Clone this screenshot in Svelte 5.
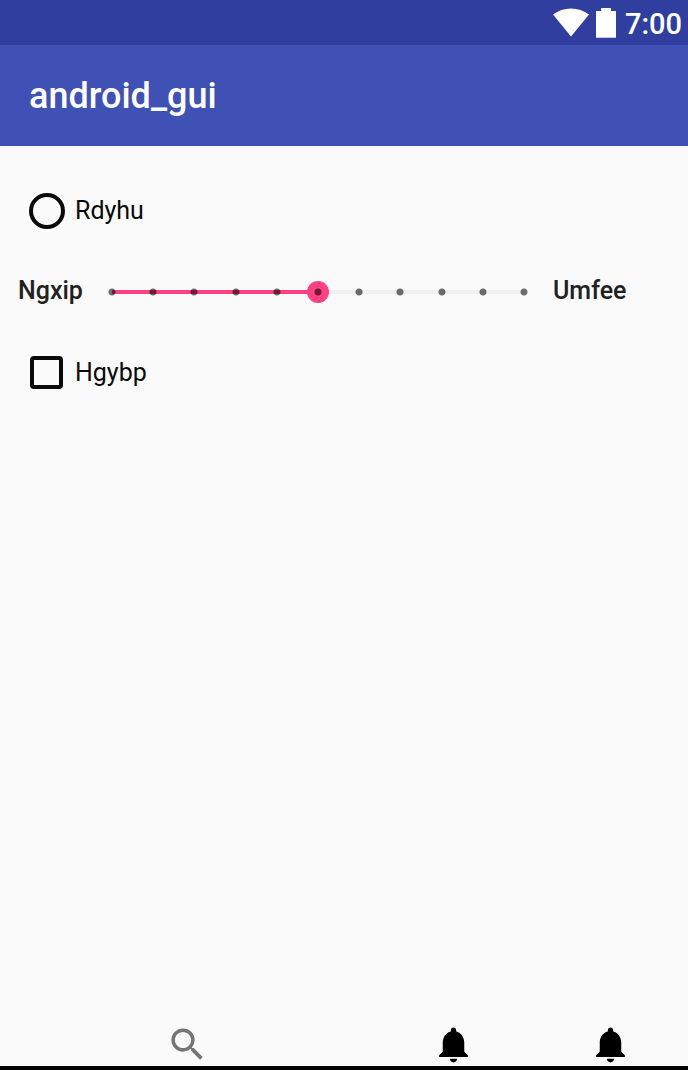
<script>
  let picked = $state('');
  let checked = $state(false);
  let level = $state(5);
  const steps = Array.from({ length: 11 }, (_, i) => i);
</script>

<div class="screen">
  <div class="status">
    <svg class="wifi" viewBox="0 0 36 29" aria-hidden="true">
      <path d="M0 6.500Q8 .5 18 .5T36 6.500L18 28.500Z" />
    </svg>
    <svg class="battery" viewBox="0 0 20 30" aria-hidden="true">
      <path d="M0 3h5V0h10v3h5v27H0Z" />
      <path class="edge" d="M0 29h20v1H0Z" />
    </svg>
    <time>7:00</time>
  </div>

  <header><h1>android_gui</h1></header>

  <main>
    <label class="choice">
      <input type="radio" name="option" value="rdyhu" bind:group={picked} />
      <span>Rdyhu</span>
    </label>

    <div class="range">
      <label for="level">Ngxip</label>
      <div class="slider">
        <input id="level" type="range" min="0" max="10" step="1" bind:value={level} style="--fill: {level * 10}%" />
        <div class="ticks" aria-hidden="true">
          {#each steps as step (step)}<i></i>{/each}
        </div>
      </div>
      <span class="end">Umfee</span>
    </div>

    <label class="choice">
      <input type="checkbox" bind:checked />
      <span>Hgybp</span>
    </label>
  </main>

  <nav>
    <button class="search" aria-label="Search">
      <svg viewBox="0 0 24 24" aria-hidden="true">
        <path d="M15.500 14h-.79l-.28-.27A6.471 6.471 0 0 0 16 9.500 6.500 6.500 0 1 0 9.500 16c1.610 0 3.090-.59 4.230-1.570l.27.28v.79l5 4.990L20.490 19l-4.990-5zm-6 0C7.010 14 5 11.990 5 9.500S7.010 5 9.500 5 14 7.010 14 9.500 11.990 14 9.500 14z" />
      </svg>
    </button>
    {#each ['Notifications', 'Alerts'] as name (name)}
      <button aria-label={name}>
        <svg viewBox="0 0 24 24" aria-hidden="true">
          <path d="M12 22c1.100 0 2-.9 2-2h-4c0 1.100.89 2 2 2zm6-6v-5c0-3.070-1.640-5.640-4.500-6.320V4c0-.83-.67-1.500-1.500-1.500s-1.500.67-1.500 1.500v.68C7.630 5.360 6 7.920 6 11v5l-2 2v1h16v-1l-2-2z" />
        </svg>
      </button>
    {/each}
  </nav>
</div>

<style>
  :global(body) {
    margin: 0;
    background: #fafafa;
  }

  .screen {
    box-sizing: border-box;
    min-height: 100vh;
    display: flex;
    flex-direction: column;
    border-bottom: 4px solid #000;
    background: #fafafa;
    color: #0a0a0a;
    font-family: Roboto, sans-serif;
    font-size: 25px;
    line-height: 32px;
  }

  .status {
    box-sizing: border-box;
    height: 45px;
    padding: 8px 6px 0 0;
    display: flex;
    justify-content: flex-end;
    align-items: flex-start;
    background: #303f9f;
    color: #fff;
    font-size: 29px;
    font-weight: 500;
  }

  .status svg {
    fill: #fff;
  }

  .wifi {
    width: 36px;
    height: 29px;
    margin-right: 7px;
  }

  .battery {
    width: 20px;
    height: 30px;
    margin-right: 9px;
  }

  .battery .edge {
    fill: #c5cae9;
  }

  header {
    display: flex;
    align-items: center;
    height: 101px;
    padding: 0 29px;
    background: #3f51b5;
    color: #fff;
  }

  h1 {
    margin: 0;
    font-size: 36px;
    line-height: 44px;
    font-weight: 500;
  }

  main {
    flex: 1;
    padding: 40px 18px;
    display: flex;
    flex-direction: column;
    gap: 32px;
  }

  .choice {
    display: flex;
    align-items: center;
    align-self: flex-start;
    gap: 10px;
    height: 49px;
    padding-left: 11px;
  }

  .choice input {
    appearance: none;
    box-sizing: border-box;
    width: 36px;
    height: 36px;
    margin: 0;
    border: 4px solid #0a0a0a;
  }

  .choice input[type='radio'] {
    border-radius: 50%;
  }

  .choice input[type='radio']:checked {
    background: radial-gradient(circle, #ff4081 8px, transparent 9px);
  }

  .choice input[type='checkbox'] {
    width: 33px;
    height: 33px;
    margin: 0 2px 0 1px;
    border-radius: 4px;
  }

  .choice input[type='checkbox']:checked {
    background: #ff4081;
  }

  .range {
    box-sizing: border-box;
    display: flex;
    align-items: center;
    height: 49px;
    padding-bottom: 2px;
    color: #212121;
    font-weight: 500;
  }

  .range label {
    width: 83px;
  }

  .range .end {
    width: 117px;
  }

  .slider {
    flex: 1;
    display: grid;
    align-items: center;
    margin-right: 18px;
    padding-top: 2px;
  }

  .slider > * {
    grid-area: 1 / 1;
  }

  .slider input {
    appearance: none;
    width: 100%;
    height: 22px;
    margin: 0;
    background: linear-gradient(to right, #ff4081 var(--fill), #f0f0f0 var(--fill)) center / calc(100% - 22px) 4px no-repeat;
  }

  .slider input::-webkit-slider-thumb {
    appearance: none;
    width: 22px;
    height: 22px;
    border-radius: 50%;
    background: #ff4081;
  }

  .ticks {
    z-index: 1;
    display: flex;
    justify-content: space-between;
    padding: 0 7px;
    pointer-events: none;
  }

  .ticks i {
    width: 8px;
    height: 8px;
    background: radial-gradient(circle, rgb(0 0 0 / 56%) 3px, transparent 4px);
  }

  nav {
    display: grid;
    grid-template-columns: 374fr 158fr 156fr;
    height: 43px;
  }

  nav button {
    display: flex;
    justify-content: center;
    padding: 0;
    border: 0;
    background: none;
    color: #000;
  }

  nav .search {
    color: #757575;
  }

  nav svg {
    width: 43px;
    height: 43px;
    fill: currentColor;
  }
</style>
